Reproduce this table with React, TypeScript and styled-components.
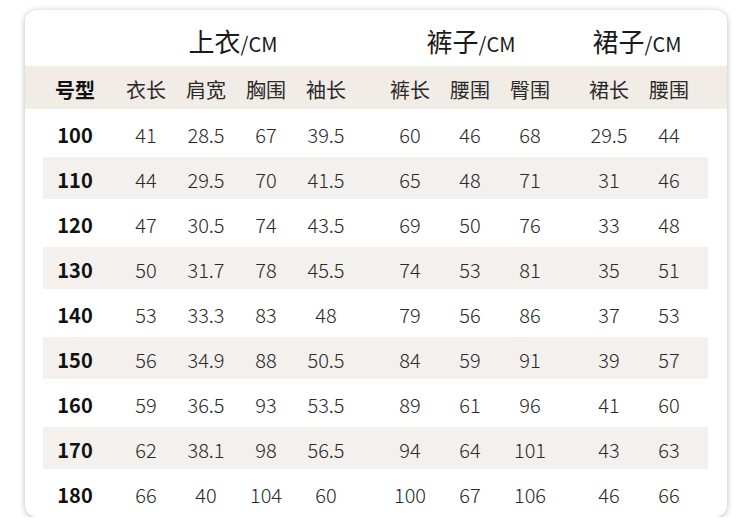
import React from "react";
import styled, { createGlobalStyle } from "styled-components";

const Global = createGlobalStyle`
  html, body { margin: 0; padding: 0; background: #ffffff; }
  body { font-family: "Noto Sans CJK SC", "Noto Sans", sans-serif; color: #222; }
`;

const Page = styled.div`
  padding: 10px 0 0 25px;
`;

const Card = styled.div`
  width: 702px;
  height: 507px;
  box-sizing: border-box;
  background: #fff;
  border-radius: 12px;
  box-shadow: 0 1px 6px rgba(0, 0, 0, 0.28);
  overflow: hidden;
`;

const TitleRow = styled.div`
  height: 56px;
  box-sizing: border-box;
  padding: 4px 0 0 18px;
  display: flex;
  align-items: center;
`;

const Spacer = styled.div<{ $w: number }>`
  width: ${(p) => p.$w}px;
  flex: none;
`;

const GroupTitle = styled.div<{ $w: number; $gap: number }>`
  width: ${(p) => p.$w}px;
  margin-left: ${(p) => p.$gap}px;
  flex: none;
  text-align: center;
  font-size: 26px;
  font-weight: 400;
  color: #1a1a1a;
  white-space: nowrap;
`;

const Unit = styled.span`
  font-size: 20px;
  font-weight: 400;
`;

const Band = styled.div`
  height: 43px;
  box-sizing: border-box;
  background: #f2ece7;
  padding: 3px 0 0 18px;
  display: flex;
  align-items: center;
`;

const Body = styled.div`
  padding: 3px 0 0 18px;
  display: flex;
  flex-direction: column;
  gap: 3px;
`;

const Row = styled.div<{ $striped: boolean }>`
  width: 665px;
  height: 42px;
  box-sizing: border-box;
  padding-top: 2px;
  display: flex;
  align-items: center;
  background: ${(p) => (p.$striped ? "#f3f0ee" : "transparent")};
`;

const Cell = styled.div<{ $gap: number; $bold?: boolean; $head?: boolean }>`
  width: 60px;
  flex: none;
  margin-left: ${(p) => p.$gap}px;
  text-align: center;
  font-size: 20px;
  font-weight: ${(p) => (p.$bold ? 600 : p.$head ? 400 : 300)};
  color: ${(p) => (p.$bold ? "#111" : "#2a2a2a")};
  white-space: nowrap;
`;

const gaps = [2, 11, 0, 0, 0, 24, 0, 0, 19, 0];

const headers = ["号型", "衣长", "肩宽", "胸围", "袖长", "裤长", "腰围", "臀围", "裙长", "腰围"];

const rows: (string | number)[][] = [
  [100, 41, 28.5, 67, 39.5, 60, 46, 68, 29.5, 44],
  [110, 44, 29.5, 70, 41.5, 65, 48, 71, 31, 46],
  [120, 47, 30.5, 74, 43.5, 69, 50, 76, 33, 48],
  [130, 50, 31.7, 78, 45.5, 74, 53, 81, 35, 51],
  [140, 53, 33.3, 83, 48, 79, 56, 86, 37, 53],
  [150, 56, 34.9, 88, 50.5, 84, 59, 91, 39, 57],
  [160, 59, 36.5, 93, 53.5, 89, 61, 96, 41, 60],
  [170, 62, 38.1, 98, 56.5, 94, 64, 101, 43, 63],
  [180, 66, 40, 104, 60, 100, 67, 106, 46, 66],
];

export default function App() {
  return (
    <Page>
      <Global />
      <Card>
        <TitleRow>
          <Spacer $w={62} />
          <GroupTitle $w={240} $gap={8}>
            上衣<Unit>/CM</Unit>
          </GroupTitle>
          <GroupTitle $w={180} $gap={28}>
            裤子<Unit>/CM</Unit>
          </GroupTitle>
          <GroupTitle $w={120} $gap={16}>
            裙子<Unit>/CM</Unit>
          </GroupTitle>
        </TitleRow>
        <Band>
          {headers.map((h, i) => (
            <Cell key={i} $gap={gaps[i]} $head $bold={i === 0}>
              {h}
            </Cell>
          ))}
        </Band>
        <Body>
          {rows.map((r, ri) => (
            <Row key={ri} $striped={ri % 2 === 1}>
              {r.map((v, i) => (
                <Cell key={i} $gap={gaps[i]} $bold={i === 0}>
                  {v}
                </Cell>
              ))}
            </Row>
          ))}
        </Body>
      </Card>
    </Page>
  );
}
